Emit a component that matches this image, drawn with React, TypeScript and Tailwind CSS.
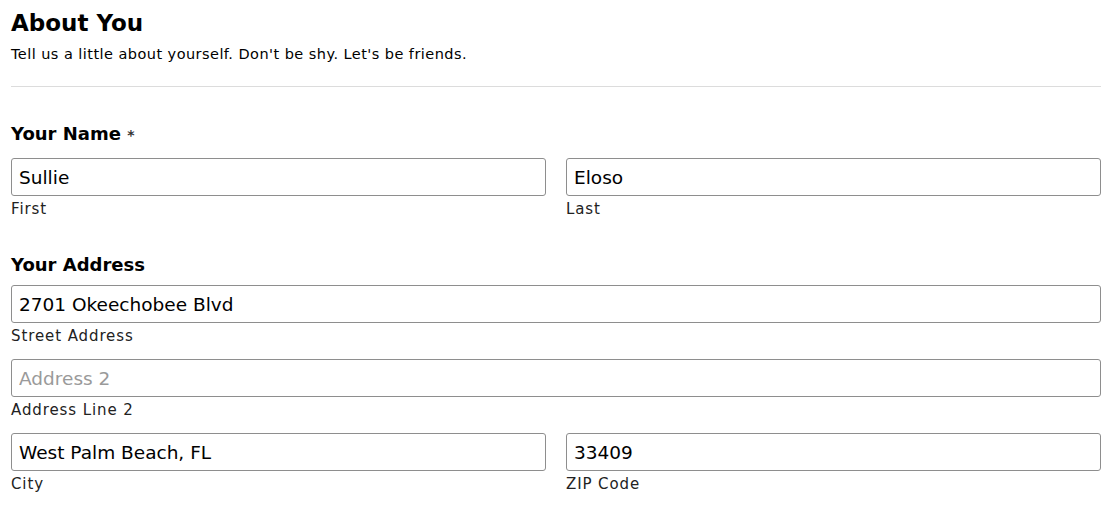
import React from "react";

const font = { fontFamily: '"DejaVu Sans", Verdana, sans-serif' };

function Field({ value, placeholder, label }: { value?: string; placeholder?: string; label: string }) {
  return (
    <div className="flex flex-col flex-1">
      <input
        readOnly
        value={value ?? ""}
        placeholder={placeholder}
        className="h-[38px] w-full rounded-[3px] border border-[#8e8e8e] bg-white px-[7px] text-[18.5px] text-black placeholder:text-[#9a9a9a] outline-none"
        style={font}
      />
      <div className="mt-[4px] text-[15px] leading-[18px] tracking-[0.9px] text-[#222]">{label}</div>
    </div>
  );
}

export default function App() {
  return (
    <div className="w-[1116px] h-[512px] bg-white text-black" style={font}>
      <div className="pl-[11px] w-[1101px]">
        <h1 className="pt-[9px] text-[23px] leading-[28px] font-bold">About You</h1>
        <p className="mt-[8px] text-[14.5px] leading-[18px] tracking-[0.45px]">Tell us a little about yourself. Don't be shy. Let's be friends.</p>
        <div className="mt-[23px] h-px bg-[#dcdcdc]" />
        <div className="mt-[36px] text-[18px] leading-[22px] font-bold">
          Your Name <span className="text-[14px] leading-[14px] text-[#333]">*</span>
        </div>
        <div className="mt-[13px] flex gap-[20px]">
          <Field value="Sullie" label="First" />
          <Field value="Eloso" label="Last" />
        </div>
        <div className="mt-[36px] text-[18px] leading-[22px] font-bold">Your Address</div>
        <div className="mt-[9px] flex">
          <Field value="2701 Okeechobee Blvd" label="Street Address" />
        </div>
        <div className="mt-[14px] flex">
          <Field placeholder="Address 2" label="Address Line 2" />
        </div>
        <div className="mt-[14px] flex gap-[20px]">
          <Field value="West Palm Beach, FL" label="City" />
          <Field value="33409" label="ZIP Code" />
        </div>
      </div>
    </div>
  );
}
